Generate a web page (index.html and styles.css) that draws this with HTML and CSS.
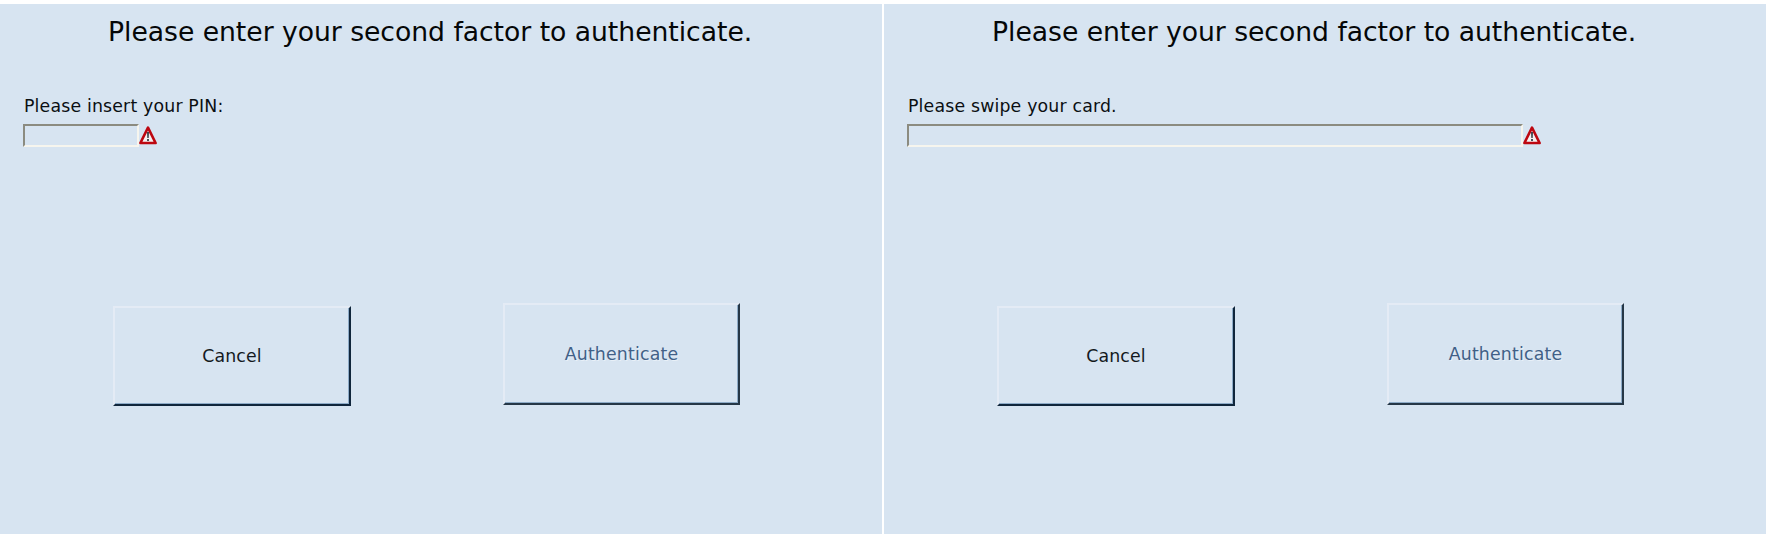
FILE: index.html
```
<!DOCTYPE html>
<html lang="en">
<head>
<meta charset="utf-8">
<title>Second factor authentication</title>
<link rel="stylesheet" href="styles.css">
</head>
<body>
<main class="screens">
  <section class="panel">
    <h1 class="title">Please enter your second factor to authenticate.</h1>
    <label class="label" for="pin">Please insert your PIN:</label>
    <div class="entry">
      <input class="field field-pin" id="pin" type="password">
      <svg class="warning" viewBox="0 0 18 19"><path d="M9 1.7 16.6 17H1.4Z" fill="#f6f1f1" stroke="#bd0710" stroke-width="2.6" stroke-linejoin="round"/><path d="M8 6h2l-.3 6H8.3ZM8.1 13h1.8v2H8.1Z" fill="#39434a"/></svg>
    </div>
    <div class="actions">
      <button class="button cancel">Cancel</button>
      <button class="button authenticate" disabled>Authenticate</button>
    </div>
  </section>
  <section class="panel">
    <h1 class="title">Please enter your second factor to authenticate.</h1>
    <label class="label" for="card">Please swipe your card.</label>
    <div class="entry">
      <input class="field field-card" id="card" type="password">
      <svg class="warning" viewBox="0 0 18 19"><path d="M9 1.7 16.6 17H1.4Z" fill="#f6f1f1" stroke="#bd0710" stroke-width="2.6" stroke-linejoin="round"/><path d="M8 6h2l-.3 6H8.3ZM8.1 13h1.8v2H8.1Z" fill="#39434a"/></svg>
    </div>
    <div class="actions">
      <button class="button cancel">Cancel</button>
      <button class="button authenticate" disabled>Authenticate</button>
    </div>
  </section>
</main>
</body>
</html>
```
FILE: styles.css
```
* { box-sizing: border-box; }
body {
  margin: 0;
  background: #fff;
  color: #0b0f12;
  font-family: "DejaVu Sans", sans-serif;
}
.screens {
  display: grid;
  grid-template-columns: 882px 882px;
  gap: 2px;
  height: 534px;
  padding-top: 4px;
}
.panel {
  display: flex;
  flex-direction: column;
  padding: 12px 23px 0;
  background: #d7e4f1;
}
.title {
  margin: 0 0 0 85px;
  color: #050708;
  font-size: 26.67px;
  font-weight: 400;
  line-height: 32px;
  letter-spacing: -.045px;
  white-space: nowrap;
}
.label {
  margin: 48px 0 0 1px;
  font-size: 17.33px;
  line-height: 20px;
  letter-spacing: .17px;
}
.entry {
  display: flex;
  align-items: flex-start;
  margin-top: 8px;
}
.field {
  height: 23px;
  padding: 0 4px;
  border: 2px solid;
  border-color: #8b8b80 #f6f5ee #f6f5ee #8b8b80;
  background: #d7e4f1;
}
.field-pin { width: 116px; }
.field-card { width: 616px; }
.warning {
  width: 18px;
  height: 19px;
  margin: 2px 0 0 .3px;
}
.actions {
  display: flex;
  align-items: flex-start;
  gap: 152px;
  margin: 156px 0 0 90px;
}
.button {
  width: 238px;
  padding: 0;
  border: 2px solid;
  border-color: #e4ebf5 #10263c #10263c #e4ebf5;
  box-shadow: inset -1px -1px #8dabc8;
  background: #d7e4f1;
  color: #14191d;
  font: 17.33px "DejaVu Sans", sans-serif;
  letter-spacing: .17px;
}
.cancel {
  height: 100px;
  margin-top: 3px;
}
.authenticate {
  width: 237px;
  height: 102px;
  border-color: #e4ebf5 #253747 #253747 #e4ebf5;
  color: #416087;
  text-shadow: 1px 1px #e8f0f8;
}
```
